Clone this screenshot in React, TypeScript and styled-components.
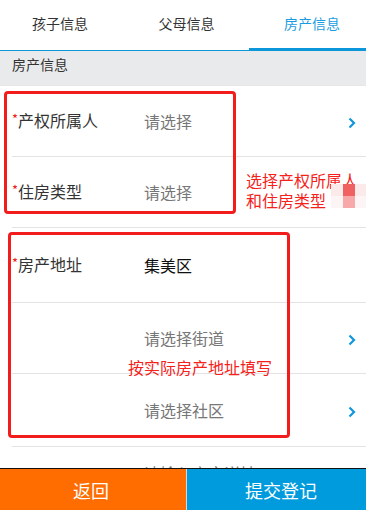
import React from 'react';
import styled, { createGlobalStyle } from 'styled-components';

const GlobalStyle = createGlobalStyle`
  html, body {
    margin: 0;
    padding: 0;
    background: #fff;
  }
  body {
    font-family: "Noto Sans CJK SC", "Noto Sans", sans-serif;
    overflow: hidden;
  }
`;

interface IRowData {
  label?: string;
  value: string;
  filled?: boolean;
  arrow?: boolean;
  height: number;
}

const rows: IRowData[] = [
  { label: '产权所属人', value: '请选择', arrow: true, height: 71 },
  { label: '住房类型', value: '请选择', height: 71 },
  { label: '房产地址', value: '集美区', filled: true, height: 75 },
  { value: '请选择街道', arrow: true, height: 71 },
  { value: '请选择社区', arrow: true, height: 73 },
  { value: '请输入房产详址', height: 52 },
];

const tabs = [
  { name: '孩子信息', offset: -4 },
  { name: '父母信息', offset: 0 },
  { name: '房产信息', offset: 9, active: true },
];

const Chevron = () => (
  <svg width="10" height="12" viewBox="0 0 10 12">
    <polyline points="2.5,1.5 7,6 2.5,10.5" fill="none" stroke="#1296db" strokeWidth="2.2" />
  </svg>
);

const App = () => {
  return (
    <Page>
      <GlobalStyle />
      <TabBar>
        {tabs.map((t) => (
          <Tab key={t.name} $active={!!t.active} $offset={t.offset}>
            {t.name}
          </Tab>
        ))}
      </TabBar>
      <SectionTitle>房产信息</SectionTitle>
      <List>
        {rows.map((r, i) => (
          <Row key={i} $height={r.height}>
            <Label>
              {r.label && (
                <>
                  <Star>*</Star>
                  {r.label}
                </>
              )}
            </Label>
            <Value $filled={!!r.filled}>{r.value}</Value>
            <ArrowBox>{r.arrow && <Chevron />}</ArrowBox>
          </Row>
        ))}
      </List>

      <MarkBox style={{ left: 4, top: 91, width: 232, height: 123 }} />
      <MarkBox style={{ left: 8, top: 232, width: 282, height: 206 }} />
      <Note style={{ left: 246, top: 170 }}>
        选择产权所属人
        <br />
        和住房类型
      </Note>
      <Note style={{ left: 128, top: 357 }}>按实际房产地址填写</Note>
      <Blob>
        <BlobCell $color="#fbeaea" />
        <BlobCell $color="#f06262" />
        <BlobCell $color="#fbeaea" />
        <BlobCell $color="#fdf5f5" />
        <BlobCell $color="#f7a9a9" />
        <BlobCell $color="#fdf5f5" />
      </Blob>

      <BottomBar>
        <BackButton>返回</BackButton>
        <SubmitButton>提交登记</SubmitButton>
      </BottomBar>
    </Page>
  );
};

export default App;

const Page = styled.div`
  position: relative;
  width: 366px;
  height: 510px;
  overflow: hidden;
  background: #fff;
`;

const TabBar = styled.div`
  display: grid;
  grid-template-columns: 124px 125px 1fr;
  height: 50px;
  border-bottom: 1px solid #0b97d9;
`;

const Tab = styled.div<{ $active: boolean; $offset: number }>`
  display: flex;
  align-items: center;
  justify-content: center;
  padding-left: ${(p) => (p.$offset > 0 ? p.$offset : 0)}px;
  padding-right: ${(p) => (p.$offset < 0 ? -p.$offset : 0)}px;
  padding-bottom: 4px;
  font-size: 14px;
  color: ${(p) => (p.$active ? '#1a9de0' : '#333')};
  box-shadow: ${(p) => (p.$active ? 'inset 0 -2px 0 #0b97d9' : 'none')};
`;

const SectionTitle = styled.div`
  height: 34px;
  background: #e9eaec;
  padding: 3px 12px 0;
  box-sizing: border-box;
  font-size: 14px;
  line-height: 20px;
  color: #333;
`;

const List = styled.div`
  display: flex;
  flex-direction: column;
  border-top: 1px solid #e6e6e6;
`;

const Row = styled.div<{ $height: number }>`
  display: flex;
  align-items: center;
  height: ${(p) => p.$height}px;
  margin-left: 12px;
  border-bottom: 1px solid #e3e3e3;
  box-sizing: border-box;
`;

const Label = styled.div`
  width: 132px;
  flex-shrink: 0;
  font-size: 16px;
  color: #333;
  margin-top: -3px;
`;

const Star = styled.span`
  color: #e8211b;
  font-size: 13px;
  vertical-align: 3px;
`;

const Value = styled.div<{ $filled: boolean }>`
  flex: 1;
  font-size: 16px;
  color: ${(p) => (p.$filled ? '#111' : '#777')};
`;

const ArrowBox = styled.div`
  width: 19px;
  display: flex;
  align-items: center;
  padding-top: 3px;
`;

const MarkBox = styled.div`
  position: absolute;
  border: 3px solid #f21c1c;
  border-radius: 4px;
  box-sizing: border-box;
`;

const Note = styled.div`
  position: absolute;
  color: #f5221b;
  font-size: 16px;
  line-height: 20px;
  white-space: nowrap;
`;

const Blob = styled.div`
  position: absolute;
  left: 331px;
  top: 184px;
  display: grid;
  grid-template-columns: 12px 12px 12px;
  grid-template-rows: 12px 12px;
`;

const BlobCell = styled.div<{ $color: string }>`
  background: ${(p) => p.$color};
`;

const BottomBar = styled.div`
  position: absolute;
  left: 0;
  right: 0;
  bottom: 0;
  height: 41px;
  display: grid;
  grid-template-columns: 186px 1fr;
  border-top: 1px solid #111;
`;

const BottomButton = styled.div`
  display: flex;
  align-items: center;
  justify-content: center;
  color: #fff;
  font-size: 18px;
`;

const BackButton = styled(BottomButton)`
  background: #ff6c00;
  padding-right: 4px;
`;

const SubmitButton = styled(BottomButton)`
  background: #009bdd;
  border-left: 1px solid #d8d8d8;
  padding-left: 9px;
`;
